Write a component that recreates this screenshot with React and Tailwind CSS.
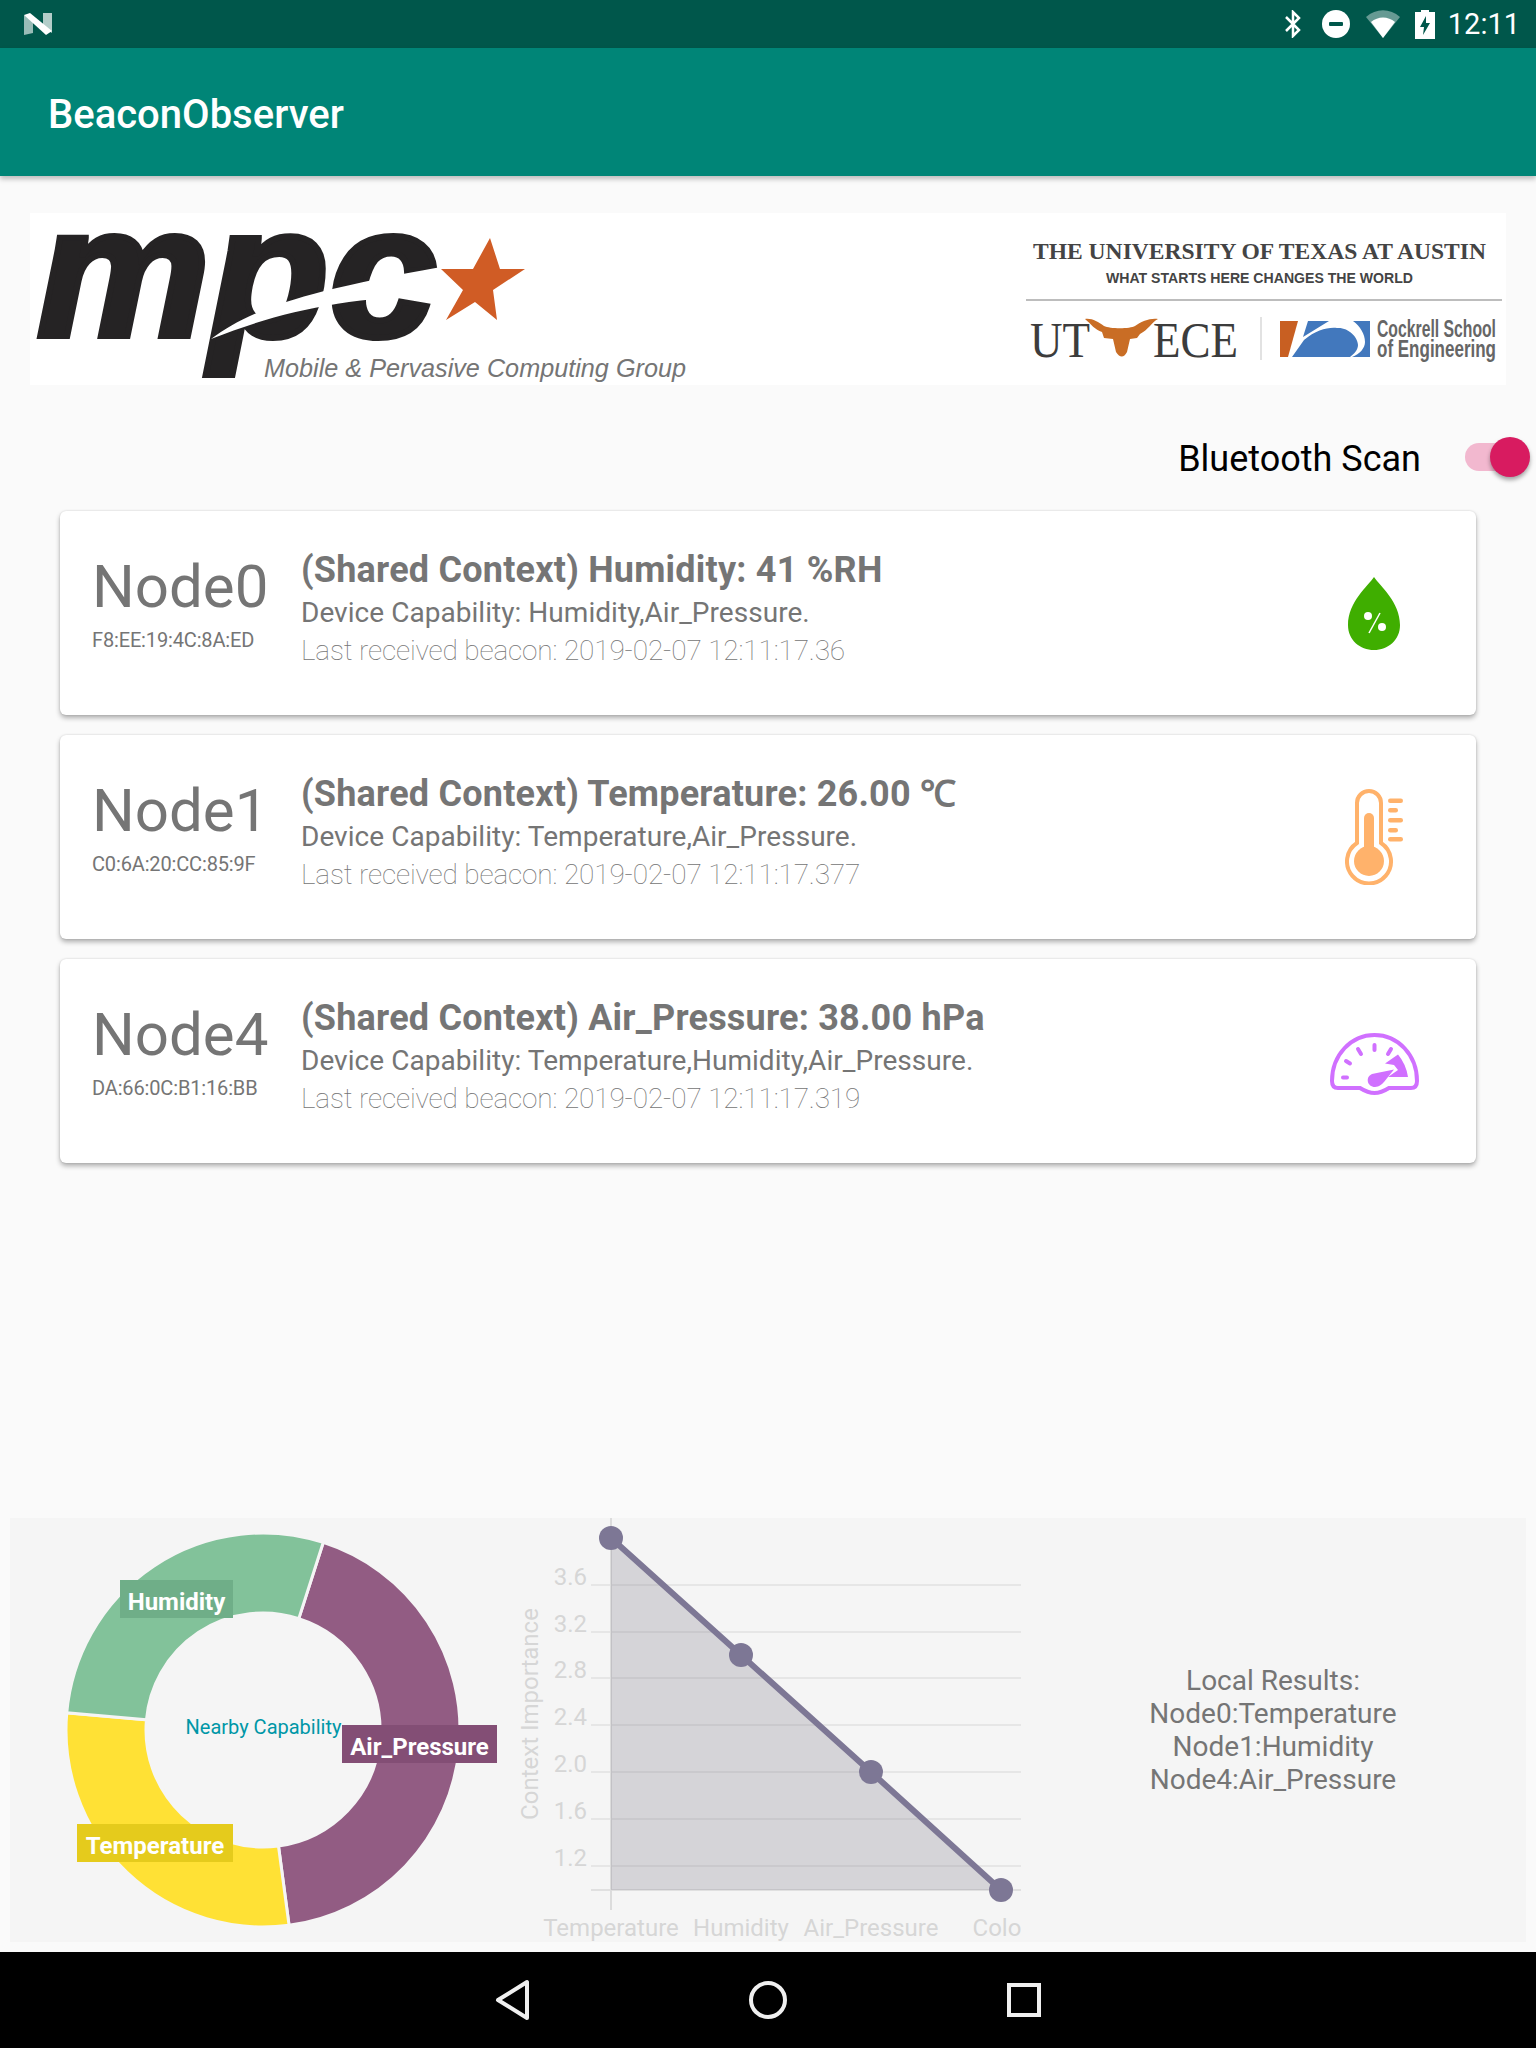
import React from 'react';

const nodes = [
  {
    id: 'Node0',
    mac: 'F8:EE:19:4C:8A:ED',
    title: '(Shared Context) Humidity: 41 %RH',
    capability: 'Device Capability: Humidity,Air_Pressure.',
    last: 'Last received beacon: 2019-02-07 12:11:17.36',
    icon: 'drop',
  },
  {
    id: 'Node1',
    mac: 'C0:6A:20:CC:85:9F',
    title: '(Shared Context) Temperature: 26.00 ℃',
    capability: 'Device Capability: Temperature,Air_Pressure.',
    last: 'Last received beacon: 2019-02-07 12:11:17.377',
    icon: 'thermo',
  },
  {
    id: 'Node4',
    mac: 'DA:66:0C:B1:16:BB',
    title: '(Shared Context) Air_Pressure: 38.00 hPa',
    capability: 'Device Capability: Temperature,Humidity,Air_Pressure.',
    last: 'Last received beacon: 2019-02-07 12:11:17.319',
    icon: 'gauge',
  },
];

const DropIcon = () => (
  <svg width="52" height="73" viewBox="0 0 52 73">
    <path d="M26 0C32 9 52 25 52 48C52 63 40 73 26 73C12 73 0 63 0 48C0 25 20 9 26 0Z" fill="#3fae00" />
    <circle cx="20" cy="39" r="4" fill="#fff" />
    <circle cx="34" cy="50" r="4" fill="#fff" />
    <path d="M32 36L21 56" stroke="#fff" strokeWidth="1.5" />
  </svg>
);

const ThermoIcon = () => (
  <svg width="58" height="96" viewBox="0 0 58 96" fill="#ffb26b">
    <path d="M12 54V14A12 12 0 0 1 36 14V54A22 22 0 1 1 12 54Z" fill="none" stroke="#ffb26b" strokeWidth="4" />
    <rect x="19" y="24" width="10" height="40" rx="5" />
    <circle cx="24" cy="72" r="15" />
    <rect x="43" y="9.5" width="15" height="4.5" rx="2.2" />
    <rect x="43" y="19" width="10" height="4.5" rx="2.2" />
    <rect x="43" y="29" width="15" height="4.5" rx="2.2" />
    <rect x="43" y="39" width="10" height="4.5" rx="2.2" />
    <rect x="43" y="48" width="15" height="4.5" rx="2.2" />
  </svg>
);

const GaugeIcon = () => (
  <svg className="mt-[6px]" width="89" height="62" viewBox="0 0 89 62" fill="#d070ff">
    <path
      d="M8 55H30Q38 60 44.5 60Q51 60 59 55H81Q87 55 87 48C87 22 68 2 44.5 2C21 2 2 22 2 48Q2 55 8 55Z"
      fill="none"
      stroke="#d070ff"
      strokeWidth="4"
    />
    <g stroke="#d070ff" strokeWidth="4" strokeLinecap="round">
      <path d="M13 44.5H17" />
      <path d="M16 28L20 30.5" />
      <path d="M28 16L31 21" />
      <path d="M44.5 12V17" />
      <path d="M61 16L58 21" />
    </g>
    <path d="M64 36.5L42 41C35 44 37 54 45 54C49 54 52 51 54 49Z" />
    <path d="M55 30.5L68 21.5Q76 31 78 44H58L68 37L64 32Z" />
  </svg>
);

const cardIcons = { drop: DropIcon, thermo: ThermoIcon, gauge: GaugeIcon };

const NodeCard = ({ node }) => {
  const Icon = cardIcons[node.icon];
  return (
    <div className="flex h-[204px] rounded-[6px] bg-white pl-[32px] pr-[52px] pt-[38px] shadow-[0_3px_5px_rgba(0,0,0,0.3),0_0_2px_rgba(0,0,0,0.15)]">
      <div className="w-[209px] shrink-0 text-[#757575]">
        <div className="pt-[3px] text-[60px] leading-[70px]">{node.id}</div>
        <div className="mt-[6px] text-[20px] leading-[24px] tracking-[-0.15px]">{node.mac}</div>
      </div>
      <div className="flex-1 text-[#757575]">
        <div className="text-[36px] font-bold leading-[42px] tracking-[0.22px]">{node.title}</div>
        <div className="mt-[5px] text-[28px] leading-[33px] tracking-[0.04px]">{node.capability}</div>
        <div className="mt-[5px] text-[28px] font-thin leading-[33px] tracking-[-0.15px] text-[#757575]">{node.last}</div>
      </div>
      <div className="-mt-[38px] flex w-[100px] items-center justify-center">
        <Icon />
      </div>
    </div>
  );
};

const StatusBar = () => (
  <div className="flex h-[48px] shrink-0 items-center justify-between bg-[#00574b] pl-[24px] pr-[16px]">
    <svg width="28" height="22" viewBox="0 0 28 22">
      <polygon points="0,2 9,7 9,20 0,22" fill="#fff" opacity="0.6" />
      <polygon points="19,0 28,0 28,20 19,14" fill="#fff" opacity="0.7" />
      <polygon points="0,2 6,0 28,18 22,22" fill="#fff" />
    </svg>
    <div className="flex items-center">
      <svg width="18" height="28" viewBox="0 0 18 28" fill="none" stroke="#fff" strokeWidth="2.5">
        <polyline points="2,7 15,20 9,26 9,2 15,8 2,21" />
      </svg>
      <svg className="ml-[20px]" width="28" height="28" viewBox="0 0 28 28">
        <circle cx="14" cy="14" r="14" fill="#fff" />
        <rect x="7" y="12" width="14" height="4" rx="1" fill="#00574b" />
      </svg>
      <svg className="ml-[16px]" width="34" height="28" viewBox="0 0 34 28">
        <path d="M0 7C10 -2 24 -2 34 7L17 28Z" fill="#fff" opacity="0.4" />
        <path d="M5 12C12 6 22 6 29 12L17 28Z" fill="#fff" />
      </svg>
      <svg className="ml-[15px]" width="20" height="29" viewBox="0 0 20 29">
        <path d="M6 0H14V2H20V29H0V2H6Z" fill="#fff" />
        <path d="M11 6L5 17H9L8 25L15 13H11Z" fill="#00574b" />
      </svg>
      <span className="ml-[13px] text-[29px] leading-[32px] text-white">12:11</span>
    </div>
  </div>
);

const MpcLogo = () => (
  <svg width="700" height="172" viewBox="30 213 700 172">
    <text
      x="37"
      y="336"
      fontFamily="'Liberation Sans', sans-serif"
      fontWeight="700"
      fontStyle="italic"
      fontSize="185"
      fill="#252324"
      stroke="#252324"
      strokeWidth="6"
      textLength="400"
      lengthAdjust="spacingAndGlyphs"
    >
      mpc
    </text>
    <path d="M211 339C250 310 300 292 441 267V295C340 298 280 312 211 339Z" fill="#fff" />
    <polygon
      points="490,238 500,269 525,269 493,290 497,320 475,302 446,320 463,290 441,269 473,269"
      fill="#d05c25"
    />
    <text
      x="264"
      y="377"
      fontFamily="'Liberation Sans', sans-serif"
      fontStyle="italic"
      fontSize="26"
      fill="#757575"
      textLength="422"
      lengthAdjust="spacingAndGlyphs"
    >
      Mobile &amp; Pervasive Computing Group
    </text>
  </svg>
);

const UtLogo = () => (
  <svg width="496" height="172" viewBox="1010 213 496 172">
    <text
      x="1033"
      y="259"
      fontFamily="'Liberation Serif', serif"
      fontWeight="700"
      fontSize="24"
      fill="#444"
      textLength="453"
      lengthAdjust="spacingAndGlyphs"
    >
      THE UNIVERSITY OF TEXAS AT AUSTIN
    </text>
    <text
      x="1106"
      y="283"
      fontFamily="'Liberation Sans', sans-serif"
      fontWeight="700"
      fontSize="14"
      fill="#444"
      textLength="307"
      lengthAdjust="spacingAndGlyphs"
    >
      WHAT STARTS HERE CHANGES THE WORLD
    </text>
    <rect x="1026" y="299" width="476" height="2" fill="#bdbdbd" />
    <text
      x="1030"
      y="357"
      fontFamily="'Liberation Serif', serif"
      fontSize="50"
      fill="#3c3c3c"
      textLength="60"
      lengthAdjust="spacingAndGlyphs"
    >
      UT
    </text>
    <path
      d="M1085 319C1092 318 1098 322 1104 326C1110 329 1130 329 1135 326C1142 321 1150 318 1158 319C1152 322 1148 330 1140 334L1137 338L1130 339L1127 352Q1122 361 1116 352L1113 339L1104 338L1102 332C1095 330 1091 324 1085 319Z"
      fill="#c96d25"
    />
    <text
      x="1153"
      y="357"
      fontFamily="'Liberation Serif', serif"
      fontSize="50"
      fill="#3c3c3c"
      textLength="85"
      lengthAdjust="spacingAndGlyphs"
    >
      ECE
    </text>
    <rect x="1260" y="317" width="2" height="43" fill="#e2e2e2" />
    <polygon points="1280,321 1298,321 1288,357 1280,357" fill="#c85f22" />
    <polygon points="1308,321 1329,321 1303,337" fill="#4278bd" />
    <path d="M1292 357L1304 340C1316 330 1328 327 1337 328C1348 327 1358 337 1358 345C1358 350 1354 354 1350 357Z" fill="#4278bd" />
    <path d="M1353 321H1370V357H1352C1360 354 1365 348 1365 342C1365 334 1360 326 1353 321Z" fill="#4278bd" />
    <text
      x="1377"
      y="337"
      fontFamily="'Liberation Sans', sans-serif"
      fontWeight="700"
      fontSize="23"
      fill="#666"
      textLength="119"
      lengthAdjust="spacingAndGlyphs"
    >
      Cockrell School
    </text>
    <text
      x="1377"
      y="357"
      fontFamily="'Liberation Sans', sans-serif"
      fontWeight="700"
      fontSize="23"
      fill="#666"
      textLength="119"
      lengthAdjust="spacingAndGlyphs"
    >
      of Engineering
    </text>
  </svg>
);

// ring segment between two clockwise angles measured from 12 o'clock
const arcPath = (cx, cy, ro, ri, a0, a1) => {
  const pt = (r, a) => {
    const t = (a * Math.PI) / 180;
    return `${(cx + r * Math.sin(t)).toFixed(2)} ${(cy - r * Math.cos(t)).toFixed(2)}`;
  };
  const large = a1 - a0 > 180 ? 1 : 0;
  return `M${pt(ro, a0)}A${ro} ${ro} 0 ${large} 1 ${pt(ro, a1)}L${pt(ri, a1)}A${ri} ${ri} 0 ${large} 0 ${pt(ri, a0)}Z`;
};

const DonutChart = () => (
  <svg className="shrink-0" width="500" height="424" viewBox="10 1518 500 424" fontFamily="Roboto, sans-serif">
    <g stroke="#f5f5f5" strokeWidth="3">
      <path d={arcPath(263, 1730, 197, 117, 17.8, 172.4)} fill="#925c83" />
      <path d={arcPath(263, 1730, 197, 117, 172.4, 275)} fill="#ffe135" />
      <path d={arcPath(263, 1730, 197, 117, 275, 377.8)} fill="#82c29a" />
    </g>
    <text x="263.5" y="1734" textAnchor="middle" fontSize="20" fill="#0097a7">
      Nearby Capability
    </text>
    <rect x="120" y="1580" width="113" height="38" fill="#6fae88" />
    <text x="176.5" y="1610" textAnchor="middle" fontSize="24" fontWeight="700" fill="#fff">
      Humidity
    </text>
    <rect x="342" y="1725" width="155" height="38" fill="#834e75" />
    <text x="419.5" y="1755" textAnchor="middle" fontSize="24" fontWeight="700" fill="#fff">
      Air_Pressure
    </text>
    <rect x="77" y="1824" width="156" height="38" fill="#e5cb1c" />
    <text x="155" y="1854" textAnchor="middle" fontSize="24" fontWeight="700" fill="#fff">
      Temperature
    </text>
  </svg>
);

const gridLines = [
  { y: 1585, label: '3.6' },
  { y: 1632, label: '3.2' },
  { y: 1678, label: '2.8' },
  { y: 1725, label: '2.4' },
  { y: 1772, label: '2.0' },
  { y: 1819, label: '1.6' },
  { y: 1866, label: '1.2' },
];

const linePoints = [
  [611, 1538],
  [741, 1655],
  [871, 1772],
  [1001, 1890],
];

const LineChart = () => (
  <svg className="shrink-0" width="520" height="424" viewBox="510 1518 520 424" fontFamily="Roboto, sans-serif">
    <defs>
      <clipPath id="chart-clip">
        <rect x="510" y="1518" width="511" height="424" />
      </clipPath>
    </defs>
    {gridLines.map((g) => (
      <g key={g.y}>
        <rect x="591" y={g.y - 1} width="430" height="2" fill="#e6e6e6" />
        <text x="587" y={g.y} textAnchor="end" fontSize="24" fill="#d6d6d6">
          {g.label}
        </text>
      </g>
    ))}
    <rect x="591" y="1889" width="430" height="2" fill="#e0e0e0" />
    <rect x="610" y="1518" width="2" height="392" fill="#dcdcdc" />
    <polygon points="611,1538 1001,1890 611,1890" fill="#6f6c7d" fillOpacity="0.24" />
    <polyline points="611,1538 741,1655 871,1772 1001,1890" fill="none" stroke="#7d7795" strokeWidth="6" />
    {linePoints.map(([x, y]) => (
      <circle key={x} cx={x} cy={y} r="12" fill="#7d7795" />
    ))}
    <text
      transform="translate(538 1714) rotate(-90)"
      textAnchor="middle"
      fontSize="24"
      fill="#d6d6d6"
    >
      Context Importance
    </text>
    <g fontSize="24" fill="#d6d6d6" textAnchor="middle" clipPath="url(#chart-clip)">
      <text x="611" y="1936">Temperature</text>
      <text x="741" y="1936">Humidity</text>
      <text x="871" y="1936">Air_Pressure</text>
      <text x="1001" y="1936">Color</text>
    </g>
  </svg>
);

const NavBar = () => (
  <div className="flex h-[96px] shrink-0 items-center justify-center bg-black">
    <svg width="36" height="42" viewBox="0 0 36 42" fill="none" stroke="#f0f0f0" strokeWidth="4" strokeLinejoin="round">
      <path d="M32 3V39L3 21Z" />
    </svg>
    <svg className="ml-[217px]" width="40" height="40" viewBox="0 0 40 40" fill="none" stroke="#f0f0f0" strokeWidth="4">
      <circle cx="20" cy="20" r="17" />
    </svg>
    <svg className="ml-[219px]" width="34" height="34" viewBox="0 0 34 34" fill="none" stroke="#f0f0f0" strokeWidth="4">
      <rect x="2" y="2" width="30" height="30" />
    </svg>
  </div>
);

export default function App() {
  return (
    <div className="flex h-[2048px] w-[1536px] flex-col overflow-hidden bg-[#fafafa] font-['Roboto',sans-serif]">
      <StatusBar />

      {/* App bar */}
      <div className="z-10 flex h-[128px] shrink-0 items-center bg-[#008577] pl-[48px] pt-[6px] shadow-[0_3px_5px_rgba(0,0,0,0.25)]">
        <span className="text-[40px] font-medium leading-[48px] text-white">BeaconObserver</span>
      </div>

      <div className="flex flex-1 flex-col">
        {/* Banner */}
        <div className="mx-[30px] mt-[37px] flex h-[172px] justify-between bg-white">
          <MpcLogo />
          <UtLogo />
        </div>

        {/* Scan toggle */}
        <div className="mt-[52px] flex h-[40px] items-center justify-end pr-[6px]">
          <span className="pt-[4px] text-[36px] leading-[40px] text-black">Bluetooth Scan</span>
          <div className="relative ml-[44px] h-[40px] w-[65px]">
            <div className="absolute left-0 top-[6px] h-[28px] w-[55px] rounded-full bg-[#f2b8cf]" />
            <div className="absolute right-0 top-0 h-[40px] w-[40px] rounded-full bg-[#d81b60] shadow-[0_3px_4px_rgba(0,0,0,0.35)]" />
          </div>
        </div>

        {/* Nodes */}
        <div className="mx-[60px] mt-[34px] flex flex-col gap-[20px]">
          {nodes.map((node) => (
            <NodeCard key={node.id} node={node} />
          ))}
        </div>

        {/* Charts */}
        <div className="mx-[10px] mb-[10px] mt-auto flex h-[424px] bg-[#f5f5f5]">
          <DonutChart />
          <LineChart />
          <div className="flex flex-1 flex-col items-center justify-center pr-[10px] text-center text-[28px] leading-[33px] text-[#757575]">
            <div>Local Results:</div>
            <div>Node0:Temperature</div>
            <div>Node1:Humidity</div>
            <div>Node4:Air_Pressure</div>
          </div>
        </div>
      </div>

      <NavBar />
    </div>
  );
}
